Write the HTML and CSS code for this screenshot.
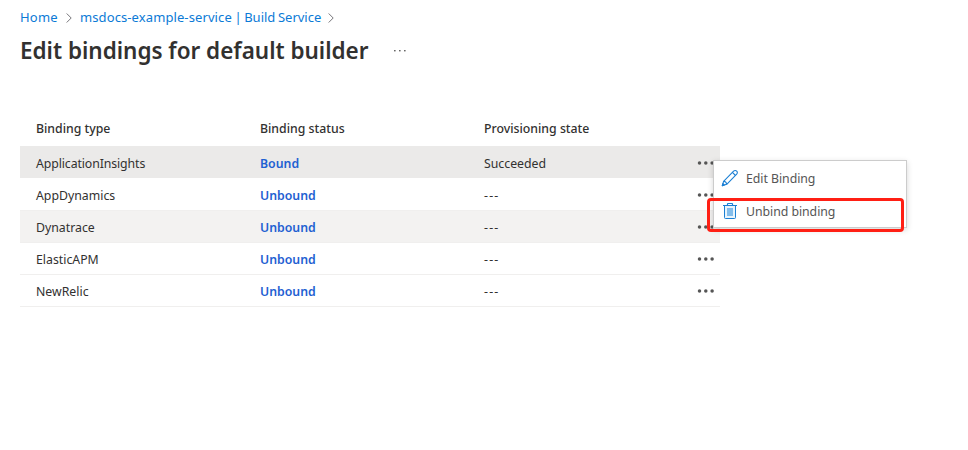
FILE: index.html
```html
<!DOCTYPE html>
<html lang="en">
<head>
<meta charset="utf-8">
<title>Edit bindings for default builder</title>
<link rel="stylesheet" href="styles.css">
</head>
<body>
<svg class="defs" width="0" height="0" aria-hidden="true">
  <symbol id="chevron" viewBox="0 0 6 10"><path d="M.7.5 5.2 5 .7 9.500" fill="none" stroke="#77757a" stroke-width="1"/></symbol>
  <symbol id="dots" viewBox="0 0 18 4"><g fill="#555"><circle cx="2.5" cy="2" r="1.75"/><circle cx="8.8" cy="2" r="1.75"/><circle cx="15.1" cy="2" r="1.75"/></g></symbol>
</svg>
<nav class="crumbs">
  <a class="crumb-home">Home</a>
  <svg class="chevron"><use href="#chevron"/></svg>
  <a class="crumb-service"><span class="service-name">msdocs-example-service</span> | Build Service</a>
  <svg class="chevron"><use href="#chevron"/></svg>
</nav>
<header class="title">
  <h1>Edit bindings for default builder</h1>
  <svg class="title-more" viewBox="0 0 12 2"><g fill="#666"><rect x="0" width="1.6" height="1.4"/><rect x="5" width="1.6" height="1.4"/><rect x="10" width="1.6" height="1.4"/></g></svg>
</header>
<main class="grid">
  <div class="row head"><span>Binding type</span><span>Binding status</span><span>Provisioning state</span></div>
  <div class="row selected"><span class="insights">ApplicationInsights</span><a>Bound</a><span>Succeeded</span><svg class="more"><use href="#dots"/></svg></div>
  <div class="row"><span>AppDynamics</span><a>Unbound</a><span class="dash">---</span><svg class="more"><use href="#dots"/></svg></div>
  <div class="row hovered"><span>Dynatrace</span><a>Unbound</a><span class="dash">---</span><svg class="more"><use href="#dots"/></svg></div>
  <div class="row"><span>ElasticAPM</span><a>Unbound</a><span class="dash">---</span><svg class="more"><use href="#dots"/></svg></div>
  <div class="row last"><span>NewRelic</span><a>Unbound</a><span class="dash">---</span><svg class="more"><use href="#dots"/></svg></div>
  <div class="menu">
    <div class="item">
      <svg class="icon" viewBox="0 0 18 18" fill="none" stroke="#1b7fd3" stroke-width="1.100" stroke-linejoin="round"><path d="M1.300 16.600 2.600 12.300 12.600 2.200C13.500 1.300 14.900 1.300 15.700 2.100S16.600 4.300 15.700 5.200L5.700 15.300Z"/><path d="M11.400 3.400 14.500 6.500M2.600 12.300C4.200 12.400 5.500 13.700 5.700 15.300"/><path d="M1.300 16.600 1.900 14.600 3.300 16Z" fill="#1b7fd3"/></svg>
      <span>Edit Binding</span>
    </div>
    <div class="item">
      <svg class="icon" viewBox="0 0 18 18"><path d="M3.500 3.500V15.600Q3.500 16.500 4.400 16.500H13.600Q14.500 16.500 14.500 15.600V3.500" fill="#e8f4fc" stroke="#1b7fd3"/><path d="M6 6H12V14H6Z" fill="#83bdeb"/><path d="M2 3.500H16M6.500 3.200V2Q6.500 1.500 7 1.500H11Q11.500 1.500 11.500 2V3.200" fill="none" stroke="#1b7fd3" stroke-width="1.200"/></svg>
      <span>Unbind binding</span>
    </div>
  </div>
  <div class="highlight"></div>
</main>
</body>
</html>
```
FILE: styles.css
```css
* { box-sizing: border-box; }
body {
  margin: 0;
  width: 968px;
  height: 450px;
  overflow: hidden;
  background: #fff;
  color: #323130;
  font: 12.3px/18px "Noto Sans", "Open Sans", sans-serif;
}
.defs { position: absolute; }
.crumbs {
  display: flex;
  align-items: center;
  height: 34px;
  padding-left: 20px;
  font-size: 13px;
  color: #0b7ad6;
}
.crumbs a { white-space: nowrap; }
.crumb-home { width: 46px; letter-spacing: .2px; }
.crumb-service { width: 248px; word-spacing: -.8px; }
.service-name { letter-spacing: .1px; }
.chevron { width: 6px; height: 10px; flex: none; margin-top: 2px; }
.crumbs .chevron + a { margin-left: 8px; }
.title {
  display: flex;
  align-items: center;
  height: 34px;
  padding-left: 20px;
}
h1 {
  margin: 0;
  width: 374px;
  font-size: 22.5px;
  line-height: 32px;
  font-weight: 600;
  letter-spacing: -.02px;
  white-space: nowrap;
}
.title-more { width: 12px; height: 2px; }
.grid {
  position: relative;
  width: 700px;
  margin: 43px 0 0 20px;
}
.row {
  display: grid;
  grid-template-columns: 224px 224px 213px 18px;
  align-items: center;
  height: 32px;
  padding: 2px 0 0 16px;
  border-top: 1px solid #f0efee;
}
.row.head { height: 35px; padding-top: 0; font-weight: 500; border: 0; }
.row.selected { background: #ebeae9; border-color: #ebeae9; }
.row.selected + .row { border-color: #fff; }
.row.hovered { background: #f3f2f1; }
.row.last { height: 33px; border-bottom: 1px solid #f0efee; }
.row a { color: #1f61d2; font-weight: 600; }
.insights { letter-spacing: -.1px; }
.dash { letter-spacing: 1.2px; }
.more { width: 18px; height: 4px; margin-top: -2px; }
.menu {
  position: absolute;
  left: 693px;
  top: 49px;
  width: 194px;
  height: 68px;
  background: #fff;
  border: 1px solid #ccc;
  box-shadow: 0 2px 6px rgba(0, 0, 0, .16);
}
.item {
  display: flex;
  align-items: center;
  height: 33px;
  padding: 1px 0 0 7px;
  color: #555;
}
.item span { margin-top: 2px; letter-spacing: -.04px; }
.icon { width: 18px; height: 18px; margin-right: 7px; }
.highlight {
  position: absolute;
  left: 687px;
  top: 87px;
  width: 197px;
  height: 34px;
  border: 3px solid #ff1f14;
  border-radius: 4px;
}
```
